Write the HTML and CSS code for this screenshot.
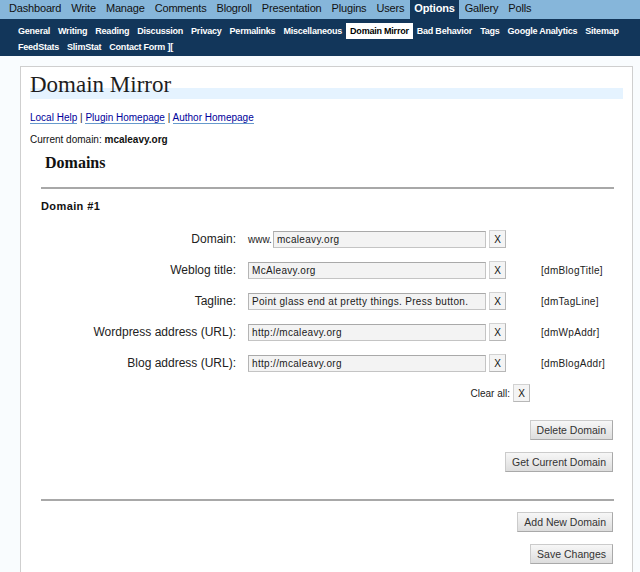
FILE: index.html
```html
<!DOCTYPE html>
<html lang="en">
<head>
<meta charset="utf-8">
<title>Domain Mirror</title>
<link rel="stylesheet" href="styles.css">
</head>
<body>
<nav class="adminmenu">
  <a href="#">Dashboard</a>
  <a href="#">Write</a>
  <a href="#">Manage</a>
  <a href="#">Comments</a>
  <a href="#">Blogroll</a>
  <a href="#">Presentation</a>
  <a href="#">Plugins</a>
  <a href="#">Users</a>
  <a href="#" class="current">Options</a>
  <a href="#">Gallery</a>
  <a href="#">Polls</a>
</nav>
<nav class="submenu">
  <a href="#">General</a>
  <a href="#">Writing</a>
  <a href="#">Reading</a>
  <a href="#">Discussion</a>
  <a href="#">Privacy</a>
  <a href="#">Permalinks</a>
  <a href="#">Miscellaneous</a>
  <a href="#" class="current">Domain Mirror</a>
  <a href="#">Bad Behavior</a>
  <a href="#">Tags</a>
  <a href="#">Google Analytics</a>
  <a href="#">Sitemap</a>
  <a href="#">FeedStats</a>
  <a href="#">SlimStat</a>
  <a href="#">Contact Form ][</a>
</nav>
<div class="wrap">
  <h2>Domain Mirror</h2>
  <p class="links"><a href="#">Local Help</a> | <a href="#">Plugin Homepage</a> | <a href="#">Author Homepage</a></p>
  <p class="current-domain">Current domain: <strong>mcaleavy.org</strong></p>
  <div class="domains">
    <h3>Domains</h3>
    <hr class="rule">
    <h4>Domain #1</h4>
    <div class="fields">
      <label class="label">Domain:</label>
      <div class="field"><span class="www">www.</span><input class="text" type="text" value="mcaleavy.org"></div>
      <button class="x" type="button">X</button>
      <span class="tag"></span>

      <label class="label">Weblog title:</label>
      <div class="field"><input class="text" type="text" value="McAleavy.org"></div>
      <button class="x" type="button">X</button>
      <span class="tag">[dmBlogTitle]</span>

      <label class="label">Tagline:</label>
      <div class="field"><input class="text" type="text" value="Point glass end at pretty things. Press button."></div>
      <button class="x" type="button">X</button>
      <span class="tag">[dmTagLine]</span>

      <label class="label">Wordpress address (URL):</label>
      <div class="field"><input class="text" type="text" value="http://mcaleavy.org"></div>
      <button class="x" type="button">X</button>
      <span class="tag">[dmWpAddr]</span>

      <label class="label">Blog address (URL):</label>
      <div class="field"><input class="text" type="text" value="http://mcaleavy.org"></div>
      <button class="x" type="button">X</button>
      <span class="tag">[dmBlogAddr]</span>
    </div>
    <div class="clear-all"><span>Clear all:</span><button class="x" type="button">X</button></div>
    <div class="actions first">
      <button class="btn" type="button">Delete Domain</button>
      <button class="btn" type="button">Get Current Domain</button>
    </div>
    <hr class="rule rule-bottom">
    <div class="actions second">
      <button class="btn" type="button">Add New Domain</button>
      <button class="btn" type="button">Save Changes</button>
    </div>
  </div>
</div>
</body>
</html>
```
FILE: styles.css
```css
html, body {
  margin: 0;
  padding: 0;
}
body {
  background: #f9fcfe;
  font-family: "Liberation Sans", Arial, sans-serif;
  color: #222;
}

/* top admin menu */
.adminmenu {
  display: flex;
  height: 19px;
  padding-left: 4px;
  background: #86b6da;
}
.adminmenu a {
  display: block;
  font-size: 11px;
  letter-spacing: -0.17px;
  line-height: 17px;
  padding: 0 5px 2px;
  color: #111;
  text-decoration: none;
}
.adminmenu a.current {
  background: #12365a;
  color: #fff;
  font-weight: bold;
  padding: 0 4px 2px;
  margin: 0 1px;
}

/* sub menu */
.submenu {
  display: flex;
  flex-wrap: wrap;
  background: #12365a;
  padding: 4px 4px 1px 14px;
}
.submenu a {
  display: block;
  font-size: 9px;
  font-weight: bold;
  letter-spacing: -0.22px;
  line-height: 15px;
  padding: 1px 4px 0;
  color: #fff;
  text-decoration: none;
}
.submenu a.current {
  background: #fff;
  color: #000;
}

/* content card */
.wrap {
  margin: 10px 7px 0 20px;
  padding: 15px 9px 40px;
  background: #fff;
  border: 1px solid #cfcfcf;
}
.wrap h2 {
  margin: 0;
  font-family: "Liberation Serif", "Times New Roman", serif;
  font-weight: normal;
  font-size: 23px;
  line-height: 6px;
  color: #1e1e1e;
  border-bottom: 11px solid #e5f3ff;
}
.links {
  margin: 12px 0 0;
  font-size: 10px;
  line-height: 14px;
  color: #222;
}
.links a {
  color: #00019b;
  text-decoration: none;
  border-bottom: 1px solid #69c;
}
.current-domain {
  margin: 8px 0 0;
  font-size: 10px;
  line-height: 14px;
  color: #111;
}

.domains {
  margin: 0 9px 0 11px;
}
.domains h3 {
  margin: 7px 0 0 4px;
  font-family: "Liberation Serif", "Times New Roman", serif;
  font-weight: bold;
  font-size: 16px;
  line-height: 18px;
  color: #111;
}
.rule {
  border: 0;
  border-top: 2px solid #a8a8a8;
  height: 0;
  margin: 15px 0 0;
}
.rule-bottom {
  margin-top: 27px;
}
.domains h4 {
  margin: 10px 0 0;
  font-size: 11px;
  letter-spacing: 0.4px;
  line-height: 14px;
  font-weight: bold;
  color: #111;
}

/* field grid */
.fields {
  display: grid;
  grid-template-columns: 207px 241px 17px auto;
  grid-auto-rows: 18px;
  row-gap: 13px;
  align-items: center;
  margin-top: 17px;
}
.label {
  text-align: right;
  padding-right: 12px;
  font-size: 12px;
  color: #222;
}
.field {
  display: flex;
  align-items: center;
  gap: 1px;
  padding-right: 3px;
}
.www {
  font-size: 10px;
  color: #222;
}
.text {
  flex: 1;
  min-width: 0;
  box-sizing: border-box;
  height: 17px;
  margin: 0;
  padding: 0 3px;
  border: 1px solid #c4c4c4;
  border-top-color: #a9a9a9;
  border-left-color: #b5b5b5;
  background: #f3f3f3;
  font-family: "Liberation Sans", Arial, sans-serif;
  font-size: 10px;
  letter-spacing: 0.32px;
  color: #1a1a1a;
}
.x {
  box-sizing: border-box;
  width: 17px;
  height: 18px;
  margin: 0;
  padding: 0;
  border: 1px solid #d2d2d2;
  border-right-color: #b7b7b7;
  border-bottom-color: #b7b7b7;
  background: #f4f4f4;
  font-family: "Liberation Sans", Arial, sans-serif;
  font-size: 10px;
  color: #111;
}
.tag {
  padding-left: 35px;
  font-size: 10px;
  letter-spacing: 0.3px;
  color: #222;
}

.clear-all {
  display: flex;
  justify-content: flex-end;
  align-items: center;
  gap: 3px;
  height: 18px;
  margin-top: 12px;
  padding-right: 84px;
  font-size: 10px;
  color: #222;
}

.actions {
  display: flex;
  flex-direction: column;
  align-items: flex-end;
  gap: 12px;
  padding-right: 1px;
}
.actions.first {
  margin-top: 18px;
}
.actions.second {
  margin-top: 11px;
}
.btn {
  box-sizing: border-box;
  height: 20px;
  margin: 0;
  padding: 0 6px;
  border: 1px solid #cbcbcb;
  border-right-color: #a9a9a9;
  border-bottom-color: #a9a9a9;
  background: linear-gradient(#f7f7f7, #dddddd);
  font-family: "Liberation Sans", Arial, sans-serif;
  font-size: 10.5px;
  color: #333;
}
```
